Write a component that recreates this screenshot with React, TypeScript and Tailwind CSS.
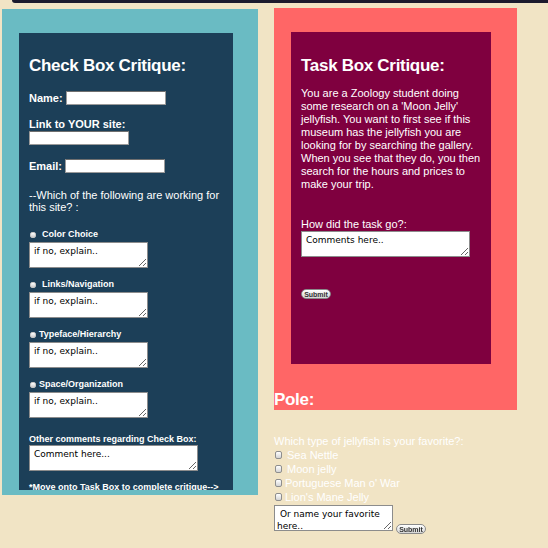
import React from "react";

const areaCls =
  "block h-[26px] border border-[#8c8c8c] bg-white px-[4px] py-[2px] text-[9px] leading-[12px] text-black font-['DejaVu_Sans',sans-serif] outline-none";

const inputCls =
  "block w-[100px] h-[14px] border border-[#9a9a9a] border-t-[#6f6f6f] bg-white outline-none";

const criteria = [
  { label: "Color Choice", gap: "gap-[6px]" },
  { label: "Links/Navigation", gap: "gap-[6px]" },
  { label: "Typeface/Hierarchy", gap: "gap-[3px]" },
  { label: "Space/Organization", gap: "gap-[3px]" },
];

const jellies = [
  { name: "Sea Nettle", gap: "gap-[5px]" },
  { name: "Moon jelly", gap: "gap-[5px]" },
  { name: "Portuguese Man o' War", gap: "gap-[3px]" },
  { name: "Lion's Mane Jelly", gap: "gap-[3px]" },
];

function SubmitButton({ className = "" }: { className?: string }) {
  return (
    <button
      className={
        "flex h-[10px] w-[30px] items-center justify-center rounded-full border border-[#8a8a8a] bg-gradient-to-b from-white to-[#d6d6d6] text-[7px] font-bold leading-none text-[#333] " +
        className
      }
    >
      Submit
    </button>
  );
}

export default function App() {
  return (
    <div className="h-screen w-full overflow-hidden bg-[#f1e4c5] font-['Liberation_Sans',Arial,sans-serif] text-white">
      {/* top strip */}
      <div className="ml-[12px] h-[3px] rounded-bl-[4px] bg-[#1b1a2d]" />

      <div className="flex items-start">
        {/* Check box side */}
        <div className="ml-[2px] mt-[6px] h-[486px] w-[256px] bg-[#6abbc3] pl-[17px] pt-[24px]">
          <div className="h-[457px] w-[214px] overflow-hidden bg-[#1c3f58] px-[10px] pt-[23px]">
            <h1 className="text-[17px] font-bold leading-[20px] tracking-[-0.3px]">
              Check Box Critique:
            </h1>

            <div className="mt-[15px] flex h-[14px] items-center text-[11px] font-bold">
              <span>Name:</span>
              <input className={inputCls + " ml-[3px]"} />
            </div>

            <div className="mt-[13px] text-[11px] font-bold leading-[13px]">
              Link to YOUR site:
            </div>
            <input className={inputCls} />

            <div className="mt-[14px] flex h-[14px] items-center text-[11px] font-bold">
              <span>Email:</span>
              <input className={inputCls + " ml-[3px]"} />
            </div>

            <p className="mt-[16px] text-[11px] leading-[12px]">
              --Which of the following are working for this site? :
            </p>

            <div className="pt-[5px]">
              {criteria.map((c) => (
                <div key={c.label} className="mt-[11px]">
                  <label className={"flex items-center text-[9px] font-bold leading-[11px] " + c.gap}>
                    <input
                      type="checkbox"
                      className="ml-[1px] h-[6px] w-[6px] appearance-none rounded-[2px] border border-[#c4c4c4] bg-gradient-to-b from-white to-[#cfcfcf]"
                    />
                    {c.label}
                  </label>
                  <textarea className={areaCls + " mt-[2px] w-[119px]"} defaultValue="if no, explain.." />
                </div>
              ))}
            </div>

            <div className="mt-[16px] text-[9px] font-bold leading-[11px]">
              Other comments regarding Check Box:
            </div>
            <textarea className={areaCls + " w-[169px]"} defaultValue="Comment here..." />

            <div className="mt-[11px] text-[9px] font-bold leading-[11px]">
              *Move onto Task Box to complete critique--&gt;
            </div>
          </div>
        </div>

        {/* Task box side */}
        <div className="ml-[16px] mt-[5px] w-[243px]">
          <div className="bg-[#ff6666] pt-[24px]">
            <div className="ml-[17px] h-[332px] w-[200px] bg-[#7f003f] pl-[10px] pr-[8px] pt-[24px]">
              <h1 className="text-[17px] font-bold leading-[20px] tracking-[-0.3px]">
                Task Box Critique:
              </h1>
              <p className="mt-[11px] text-[11px] leading-[13px]">
                You are a Zoology student doing some research on a 'Moon Jelly' jellyfish. You
                want to first see if this museum has the jellyfish you are looking for by
                searching the gallery. When you see that they do, you then search for the hours
                and prices to make your trip.
              </p>

              <div className="mt-[27px] text-[11px] leading-[13px]">How did the task go?:</div>
              <textarea className={areaCls + " w-[169px]"} defaultValue="Comments here.." />

              <SubmitButton className="mt-[32px]" />
            </div>

            <h2 className="mt-[26px] text-[17px] font-bold leading-[20px] tracking-[-0.3px]">
              Pole:
            </h2>
          </div>

          {/* poll */}
          <div className="mt-[25px] text-[11px]">
            <div className="leading-[13px]">Which type of jellyfish is your favorite?:</div>
            {jellies.map((j) => (
              <label key={j.name} className={"flex h-[14px] items-center " + j.gap}>
                <input
                  type="checkbox"
                  className="ml-[1px] h-[8px] w-[7px] appearance-none rounded-[2px] border border-[#8e8e8e] bg-gradient-to-b from-white to-[#d4d4d4]"
                />
                {j.name}
              </label>
            ))}
            <div className="mt-[1px] flex items-end">
              <textarea
                className={areaCls + " w-[119px] pl-[2px]"}
                defaultValue=" Or name your favorite here.."
              />
              <SubmitButton className="mb-[-3px] ml-[3px]" />
            </div>
          </div>
        </div>
      </div>
    </div>
  );
}
